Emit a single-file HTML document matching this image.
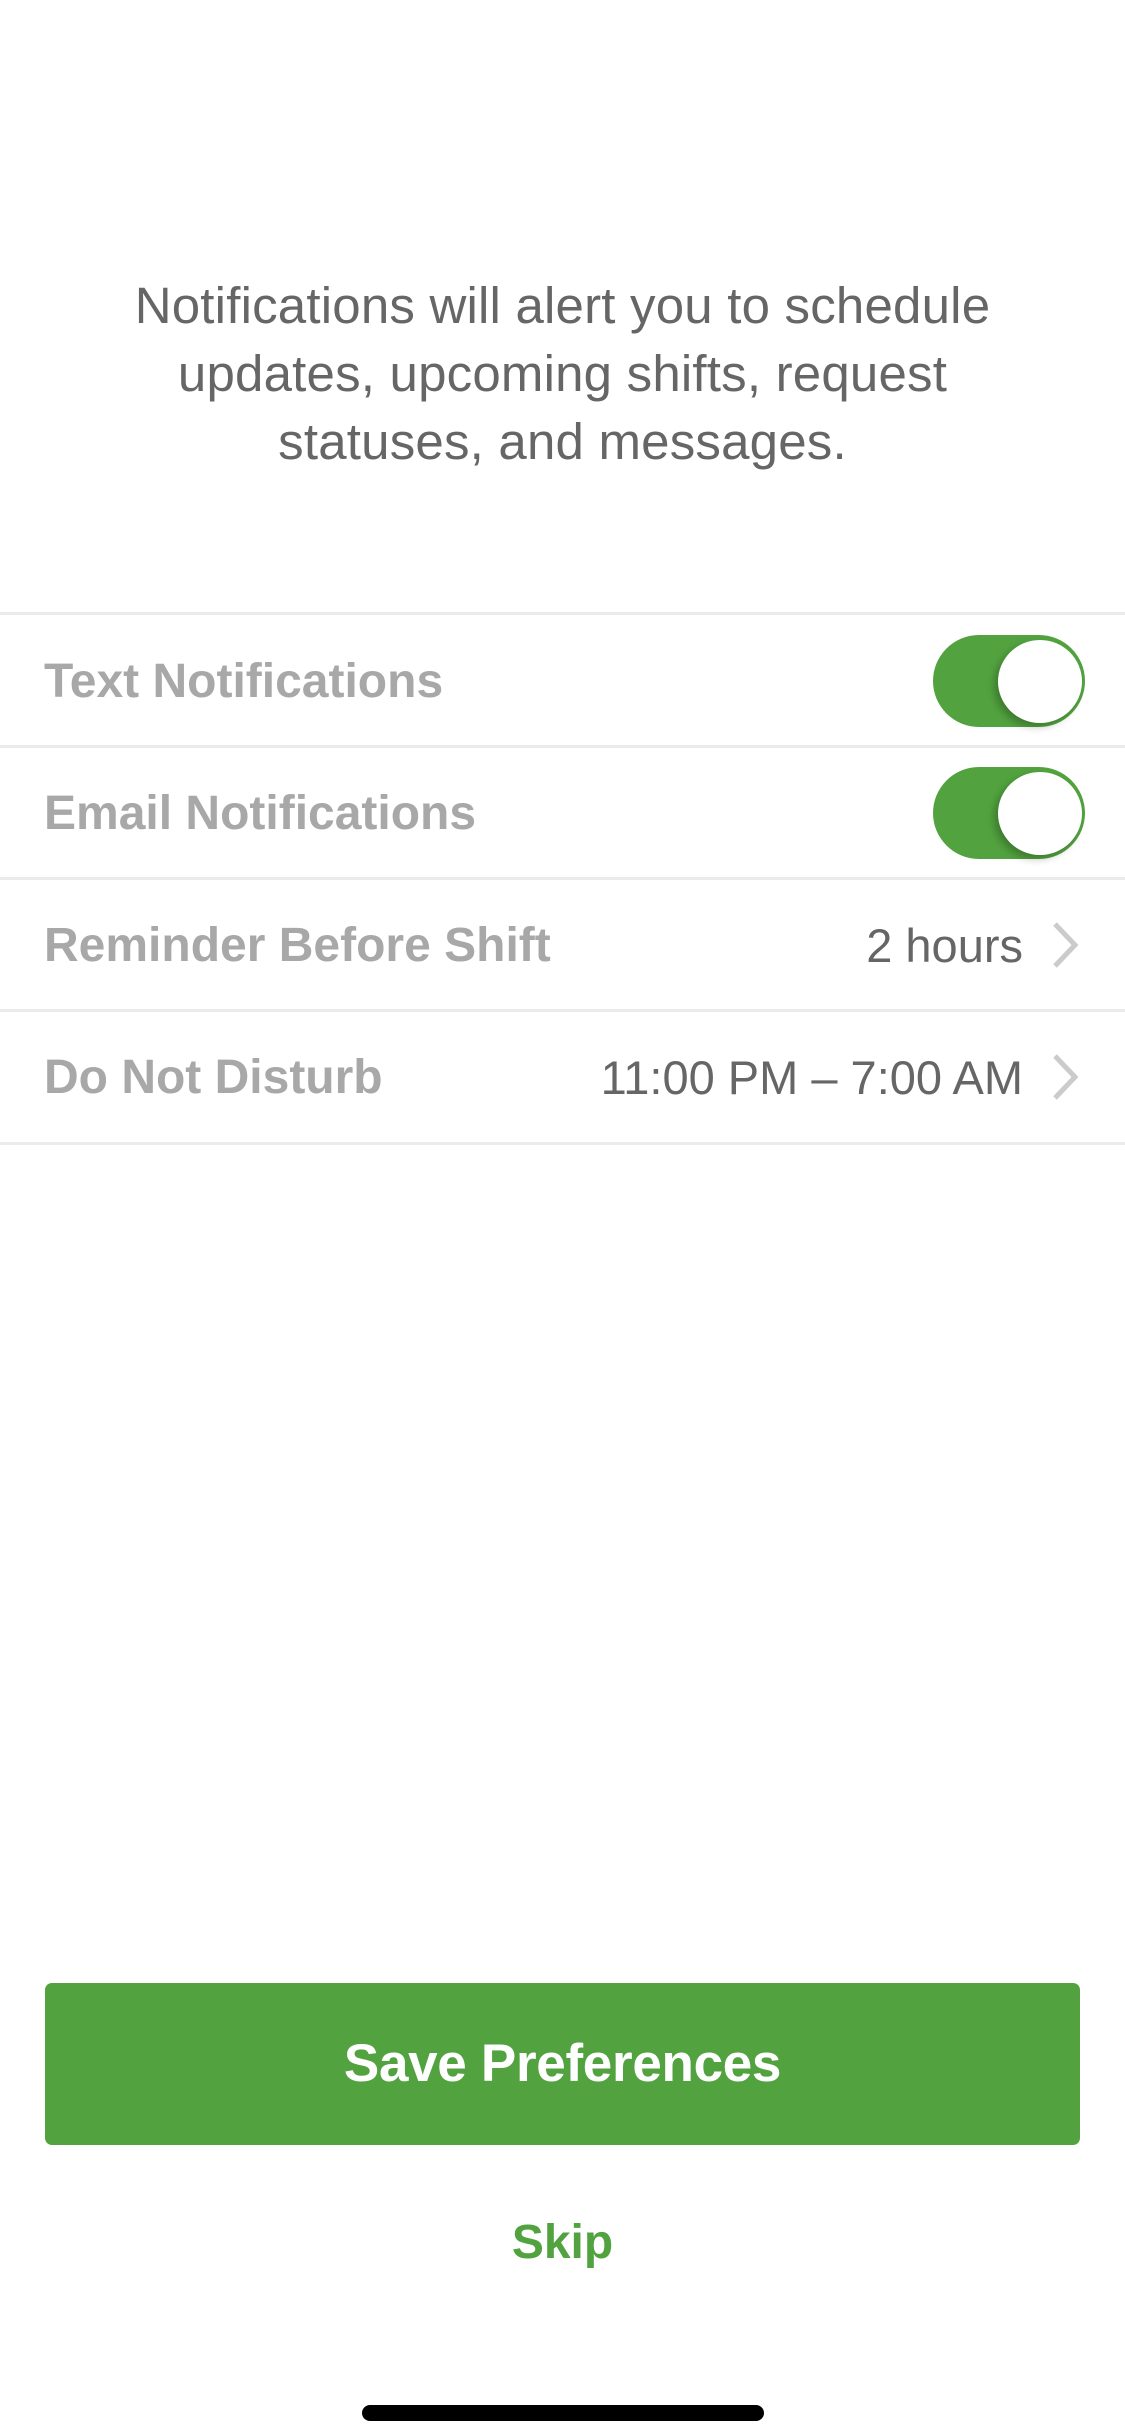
<!DOCTYPE html>
<html><head><meta charset="utf-8"><style>
*{margin:0;padding:0;box-sizing:border-box}
body{width:1125px;height:2436px;background:#fff;position:relative;overflow:hidden;font-family:"Liberation Sans",sans-serif}
.p{position:absolute;left:0;width:1125px;top:272px;text-align:center;font-size:51px;line-height:68px;color:#666;letter-spacing:0.2px}
.line{position:absolute;left:0;width:1125px;height:3px;background:#ebebeb}
.lab{position:absolute;left:44px;font-size:48px;font-weight:bold;color:#a8a8a8;line-height:50px;letter-spacing:0px}
.val{position:absolute;right:102px;font-size:47px;color:#666;line-height:50px;text-align:right}
.tog{position:absolute;left:933px;width:152px;height:92px;border-radius:46px;background:#52a33f}
.tog .k{position:absolute;left:65px;top:5px;width:84px;height:83px;border-radius:50%;background:#fff;box-shadow:-4px 4px 8px rgba(0,0,0,0.25)}
.chev{position:absolute;left:1050px;width:30px;height:46px}
.btn{position:absolute;left:45px;top:1983px;width:1035px;height:162px;border-radius:7px;background:#52a33f;color:#fff;font-weight:bold;font-size:53px;text-align:center;line-height:162px;letter-spacing:-0.3px}
.skip{position:absolute;left:0;width:1125px;top:2215px;text-align:center;color:#52a33f;font-weight:bold;font-size:48px;line-height:56px}
.home{position:absolute;left:362px;top:2405px;width:402px;height:16px;border-radius:8px;background:#000}
</style></head><body>
<div class="p">Notifications will alert you to schedule<br>updates, upcoming shifts, request<br>statuses, and messages.</div>
<div class="line" style="top:612px"></div>
<div class="line" style="top:745px"></div>
<div class="line" style="top:877px"></div>
<div class="line" style="top:1009px"></div>
<div class="line" style="top:1142px"></div>
<div class="lab" style="top:657px">Text Notifications</div>
<div class="tog" style="top:635px"><div class="k"></div></div>
<div class="lab" style="top:789px">Email Notifications</div>
<div class="tog" style="top:767px"><div class="k"></div></div>
<div class="lab" style="top:921px">Reminder Before Shift</div>
<div class="val" style="top:921px">2 hours</div>
<svg class="chev" style="top:922px" viewBox="0 0 30 46"><path d="M5 2 L25 23 L5 44" fill="none" stroke="#cbcbcb" stroke-width="5"/></svg>
<div class="lab" style="top:1053px">Do Not Disturb</div>
<div class="val" style="top:1053px">11:00 PM – 7:00 AM</div>
<svg class="chev" style="top:1054px" viewBox="0 0 30 46"><path d="M5 2 L25 23 L5 44" fill="none" stroke="#cbcbcb" stroke-width="5"/></svg>
<div class="btn">Save Preferences</div>
<div class="skip">Skip</div>
<div class="home"></div>
</body></html>
